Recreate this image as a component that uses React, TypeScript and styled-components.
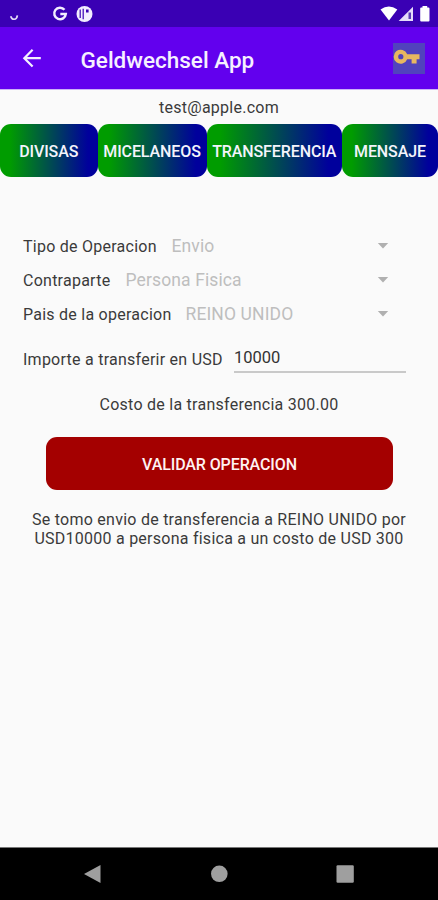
import React from "react";
import styled, { createGlobalStyle } from "styled-components";

const GlobalStyle = createGlobalStyle`
  * { box-sizing: border-box; }
  body { margin: 0; background: #fafafa; }
`;

const Screen = styled.div`
  width: 438px;
  height: 900px;
  display: flex;
  flex-direction: column;
  overflow: hidden;
  background: #fafafa;
  color: #3a3a3a;
  font-family: Roboto, "Liberation Sans", sans-serif;
  font-size: 16px;
  line-height: 19px;
`;

const StatusBar = styled.div`
  height: 27px;
  flex: none;
  background: #3a00b4;
`;

const AppBar = styled.header`
  height: 63px;
  flex: none;
  display: flex;
  align-items: center;
  padding: 0 13px 0 22px;
  background: #6200ee;
  border-bottom: 1px solid #ccb2f8;
`;

const Title = styled.h1`
  flex: 1;
  margin: 3px 0 0 38.5px;
  color: #f6f0ff;
  font-size: 22.5px;
  line-height: 28px;
  font-weight: 500;
`;

const KeyTile = styled.div`
  width: 32px;
  height: 31px;
  background: #5142bd;
`;

const Email = styled.div`
  height: 34px;
  flex: none;
  padding-top: 8px;
  text-align: center;
  letter-spacing: 0.25px;
`;

const Tabs = styled.nav`
  display: flex;
  flex: none;
  height: 53px;
`;

const Tab = styled.button<{ $width: number }>`
  width: ${(p) => p.$width}px;
  flex: none;
  padding: 2px 0 0;
  border: 0;
  border-radius: 11px;
  background: linear-gradient(90deg, #009c00 10%, #00009c 90%);
  color: #f4f4fc;
  font: 500 16px/19px Roboto, sans-serif;
  letter-spacing: -0.1px;
  white-space: nowrap;
`;

const Form = styled.main`
  flex: 1;
  padding: 52px 32px 0 23px;
`;

const Field = styled.div`
  display: flex;
  align-items: center;
  height: 34px;
`;

const Label = styled.span<{ $width: number }>`
  width: ${(p) => p.$width}px;
  flex: none;
  white-space: nowrap;
  letter-spacing: 0.25px;
`;

const Choice = styled.span`
  flex: 1;
  color: #bebebe;
  font-size: 17.5px;
  letter-spacing: 0.12px;
  white-space: nowrap;
`;

const Arrow = styled.svg`
  margin-right: 17px;
`;

const AmountField = styled(Field)`
  height: 42px;
  align-items: flex-end;
`;

const AmountLabel = styled(Label)`
  padding-bottom: 4px;
`;

const Amount = styled.input`
  width: 172px;
  height: 27px;
  padding: 0 0 2px;
  border: 0;
  border-bottom: 2px solid #c9c9c9;
  border-radius: 0;
  background: transparent;
  color: #333;
  outline: 0;
  font: 400 16.5px/20px Roboto, sans-serif;
`;

const Cost = styled.p`
  margin: 22px 0 23px;
  padding-left: 9px;
  text-align: center;
  letter-spacing: 0.26px;
`;

const Submit = styled.button`
  display: block;
  width: 347px;
  height: 53px;
  margin-left: 23px;
  padding: 2px 0 0;
  border: 0;
  border-radius: 11px;
  background: #a40000;
  color: #fff2f2;
  font: 500 16px/19px Roboto, sans-serif;
  letter-spacing: -0.1px;
`;

const Result = styled.p`
  margin: 20px 0 0;
  padding-left: 9px;
  text-align: center;
  white-space: nowrap;
  letter-spacing: 0.25px;
`;

const NavBar = styled.footer`
  height: 53px;
  flex: none;
  background: #000;
  border-top: 1px solid #777;
`;

const DropArrow = () => (
  <Arrow width="12" height="6" viewBox="0 0 12 6">
    <path d="M.8 0H11.2L6 5.5Z" fill="#b0b0b0" />
  </Arrow>
);

const fields = [
  { label: "Tipo de Operacion", width: 148.5, value: "Envio" },
  { label: "Contraparte", width: 102.5, value: "Persona Fisica" },
  { label: "Pais de la operacion", width: 162.5, value: "REINO UNIDO" },
];

export default function App() {
  return (
    <Screen>
      <GlobalStyle />
      <StatusBar>
        <svg width="438" height="27" viewBox="0 0 438 27" fill="none">
          <path d="M10.7 16.2C12 20.6 16.7 20.2 17.4 15.3" stroke="#e2d8f6" strokeWidth="1.7" />
          <path d="M64.5 9.8A5.8 5.8 0 1 0 65.8 14H60.3" stroke="#f2edff" strokeWidth="2.5" />
          <circle cx="84.5" cy="14" r="8" fill="#f2edff" />
          <path d="M79.6 9.5H80.8V18H79.6ZM82.6 8.8H83.8V19.2H82.6ZM86 9.5H88.6V12.4H86Z" fill="#3a00b4" />
          <path d="M380.5 9.5Q388.8 3.5 397.3 9.5L389 20.5Z" fill="#fff" />
          <path d="M398.7 21L413 6.8V21Z" fill="#e6dcfa" />
          <path d="M408.5 12.5H411V19H408.5Z" fill="#5b3bb5" />
          <path d="M420.2 8.5Q420.2 7.5 421.2 7.5H422.5V6H427.2V7.5H428.5Q429.5 7.5 429.5 8.5V20.5Q429.5 21.5 428.5 21.5H421.2Q420.2 21.5 420.2 20.5Z" fill="#fff" />
        </svg>
      </StatusBar>
      <AppBar>
        <svg width="20" height="20" viewBox="0 0 20 20" fill="none">
          <path d="M10.6 1.8L2.3 10.2L10.6 18.6M2.3 10.2H18.8" stroke="#f4efff" strokeWidth="2.2" />
        </svg>
        <Title>Geldwechsel App</Title>
        <KeyTile>
          <svg width="32" height="31" viewBox="0 0 32 31">
            <path
              fillRule="evenodd"
              fill="#e8b860"
              d="M14.2 11.2A7 7 0 1 0 14.2 16.2H18.6V20.5H23.6V16.2H26.5V11.2ZM7.8 11.1A2.6 2.6 0 1 1 7.8 16.3A2.6 2.6 0 1 1 7.8 11.1Z"
            />
          </svg>
        </KeyTile>
      </AppBar>
      <Email>test@apple.com</Email>
      <Tabs>
        <Tab $width={97.5}>DIVISAS</Tab>
        <Tab $width={109}>MICELANEOS</Tab>
        <Tab $width={135.5}>TRANSFERENCIA</Tab>
        <Tab $width={96}>MENSAJE</Tab>
      </Tabs>
      <Form>
        {fields.map((f) => (
          <Field key={f.label}>
            <Label $width={f.width}>{f.label}</Label>
            <Choice>{f.value}</Choice>
            <DropArrow />
          </Field>
        ))}
        <AmountField>
          <AmountLabel $width={211}>Importe a transferir en USD</AmountLabel>
          <Amount defaultValue="10000" />
        </AmountField>
        <Cost>Costo de la transferencia 300.00</Cost>
        <Submit>VALIDAR OPERACION</Submit>
        <Result>
          Se tomo envio de transferencia a REINO UNIDO por
          <br />
          USD10000 a persona fisica a un costo de USD 300
        </Result>
      </Form>
      <NavBar>
        <svg width="438" height="52" viewBox="0 0 438 52" fill="#9f9f9f">
          <path d="M84 26L100.5 17V35Z" />
          <circle cx="219.3" cy="25.8" r="8.3" />
          <rect x="336.5" y="17.3" width="17.3" height="17.5" rx="1.2" />
        </svg>
      </NavBar>
    </Screen>
  );
}
